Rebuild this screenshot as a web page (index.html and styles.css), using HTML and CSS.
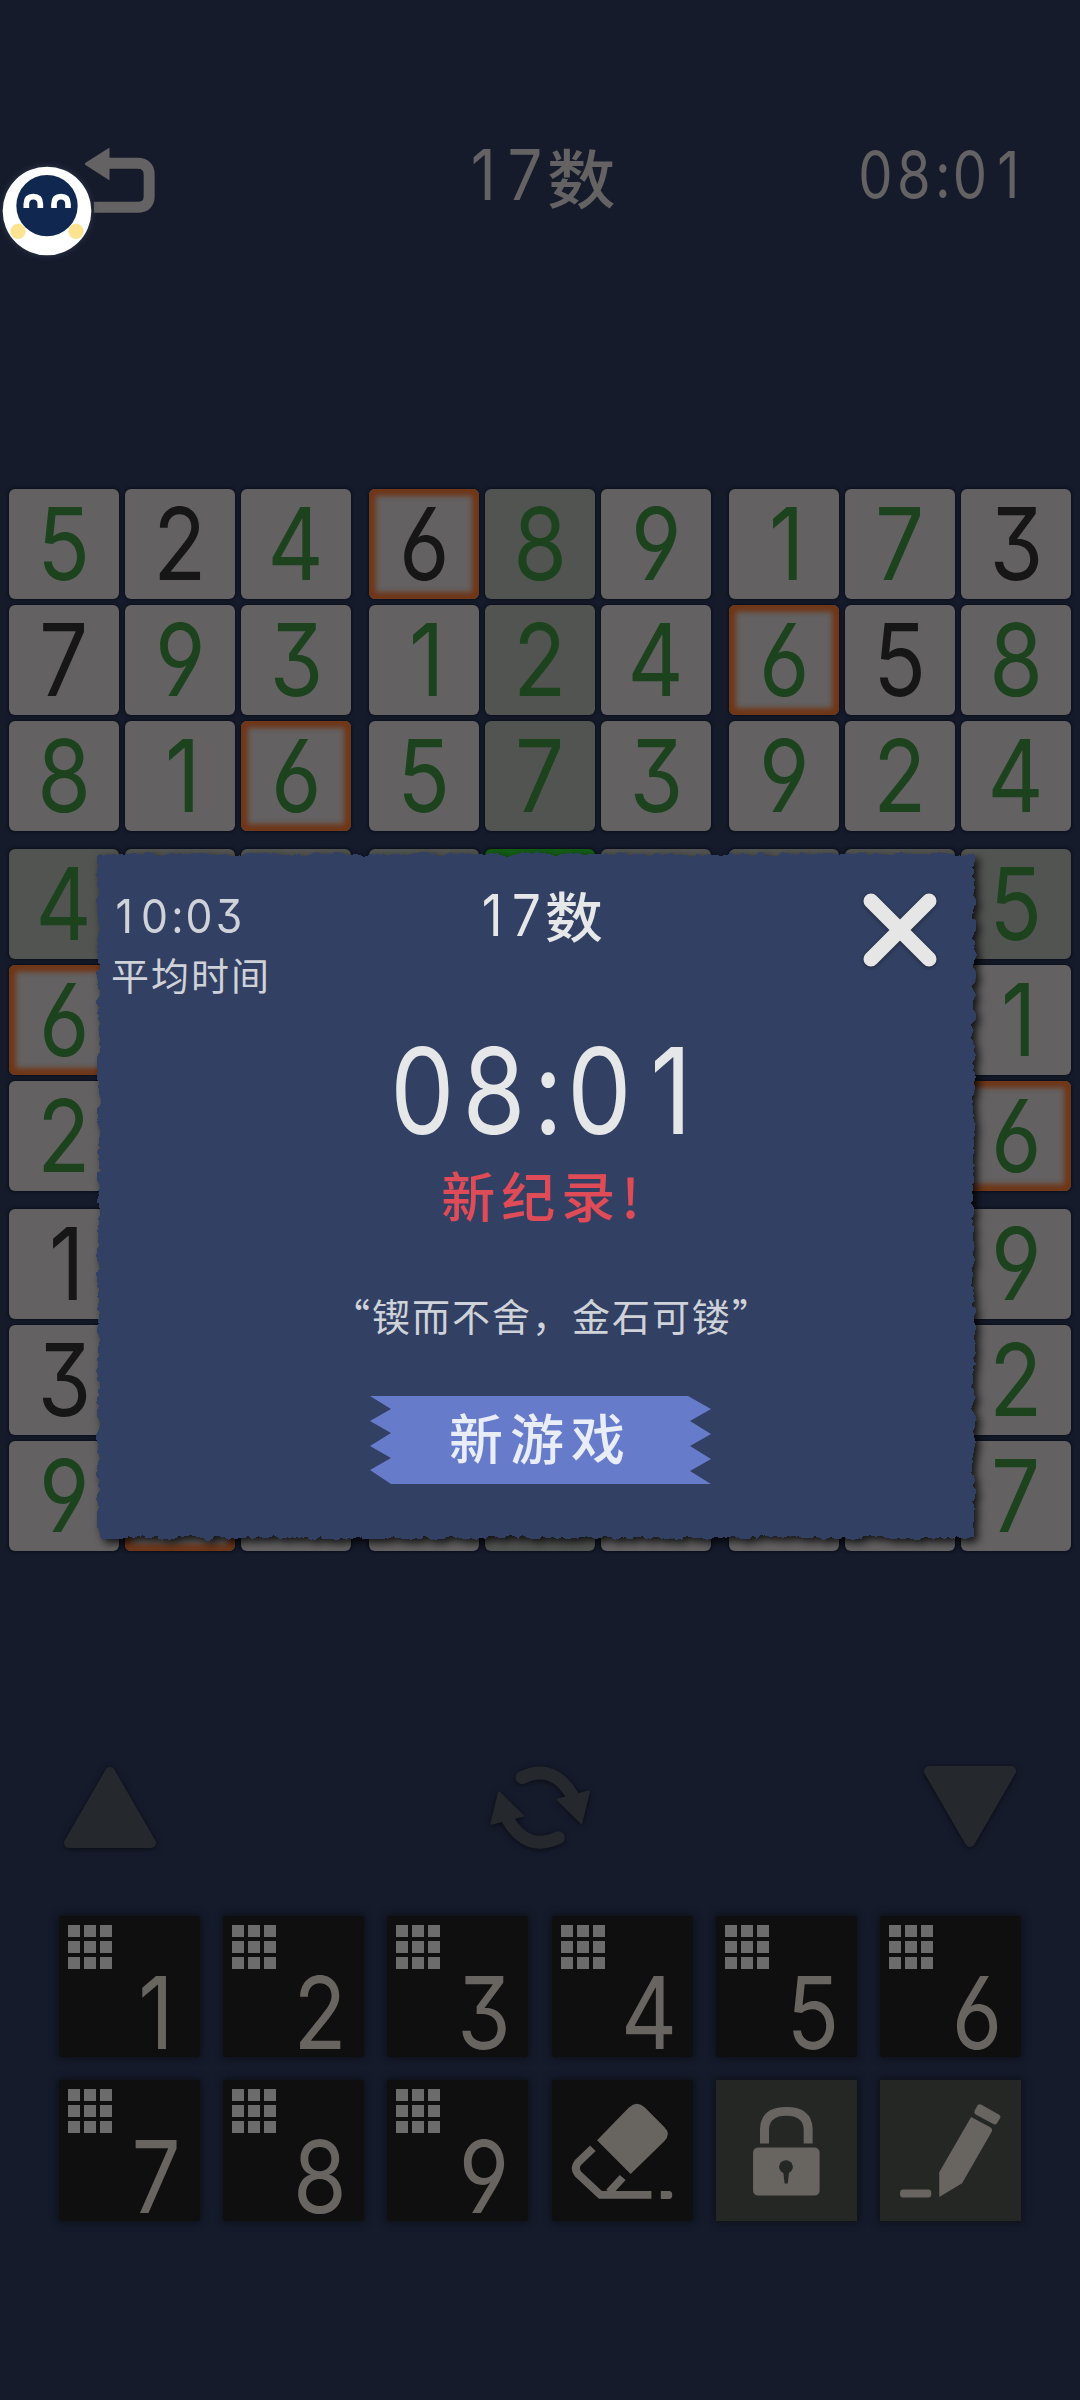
FILE: index.html
```html
<!DOCTYPE html>
<html lang="zh-CN">
<head>
<meta charset="utf-8">
<title>17数</title>
<link rel="stylesheet" href="styles.css">
</head>
<body>
<div class="screen">
  <header class="topbar">
    <svg class="back" viewBox="0 0 210 198"><path d="M3 44 73 0Q75-1 75 2V94Q75 97 72 95L3 51Q-1 48 3 44Z" fill="#646262"/><path d="M70 46H158Q194 46 194 80V144Q194 178 158 178H28" fill="none" stroke="#646262" stroke-width="33"/></svg>
    <h1 class="title"><span class="num"><b class="one">1</b>7</span><span class="han">数</span></h1>
    <div class="clock num">08<b class="colon">:</b>0<b class="one">1</b></div>
  </header>

  <main class="board">
    <div class="cell"><i>5</i></div><div class="cell given"><i>2</i></div><div class="cell"><i>4</i></div><div class="cell given same"><i>6</i></div><div class="cell tint"><i>8</i></div><div class="cell"><i>9</i></div><div class="cell"><i class="slim">1</i></div><div class="cell"><i>7</i></div><div class="cell given"><i>3</i></div>
    <div class="cell given"><i>7</i></div><div class="cell"><i>9</i></div><div class="cell"><i>3</i></div><div class="cell"><i class="slim">1</i></div><div class="cell tint"><i>2</i></div><div class="cell"><i>4</i></div><div class="cell same"><i>6</i></div><div class="cell given"><i>5</i></div><div class="cell"><i>8</i></div>
    <div class="cell"><i>8</i></div><div class="cell"><i class="slim">1</i></div><div class="cell same"><i>6</i></div><div class="cell"><i>5</i></div><div class="cell tint"><i>7</i></div><div class="cell"><i>3</i></div><div class="cell"><i>9</i></div><div class="cell"><i>2</i></div><div class="cell"><i>4</i></div>
    <div class="cell tint"><i>4</i></div><div class="cell tint"></div><div class="cell tint"></div><div class="cell tint"></div><div class="cell active"></div><div class="cell tint"></div><div class="cell tint"></div><div class="cell tint"></div><div class="cell tint"><i>5</i></div>
    <div class="cell same"><i>6</i></div><div class="cell"></div><div class="cell"></div><div class="cell"></div><div class="cell"></div><div class="cell"></div><div class="cell"></div><div class="cell"></div><div class="cell"><i class="slim">1</i></div>
    <div class="cell"><i>2</i></div><div class="cell"></div><div class="cell"></div><div class="cell"></div><div class="cell"></div><div class="cell"></div><div class="cell"></div><div class="cell"></div><div class="cell same"><i>6</i></div>
    <div class="cell given"><i class="slim">1</i></div><div class="cell"></div><div class="cell"></div><div class="cell"></div><div class="cell"></div><div class="cell"></div><div class="cell"></div><div class="cell"></div><div class="cell"><i>9</i></div>
    <div class="cell given"><i>3</i></div><div class="cell"></div><div class="cell"></div><div class="cell"></div><div class="cell"></div><div class="cell"></div><div class="cell"></div><div class="cell"></div><div class="cell"><i>2</i></div>
    <div class="cell"><i>9</i></div><div class="cell same"></div><div class="cell"></div><div class="cell"></div><div class="cell tint"></div><div class="cell"></div><div class="cell"></div><div class="cell"></div><div class="cell"><i>7</i></div>
  </main>

  <nav class="tools">
    <svg class="tri" viewBox="0 0 94 84"><path d="M47 7 88 78H6Z"/></svg>
    <svg class="refresh" viewBox="150 70 302 262"><g stroke-width="39" stroke-linecap="round"><path d="M245 111Q340 67 397 165"/><path d="M355 292Q260 336 203 238"/></g><path d="M352 177 447 153 424 248Z"/><path d="M248 226 153 250 176 155Z"/></svg>
    <svg class="tri" viewBox="0 0 94 84"><path d="M47 77 6 6H88Z"/></svg>
  </nav>

  <section class="pad">
    <button class="key"><span class="dots"></span><i>1</i></button>
    <button class="key"><span class="dots"></span><i>2</i></button>
    <button class="key"><span class="dots"></span><i>3</i></button>
    <button class="key"><span class="dots"></span><i>4</i></button>
    <button class="key"><span class="dots"></span><i>5</i></button>
    <button class="key"><span class="dots"></span><i>6</i></button>
    <button class="key"><span class="dots"></span><i>7</i></button>
    <button class="key"><span class="dots"></span><i>8</i></button>
    <button class="key"><span class="dots"></span><i>9</i></button>
    <button class="key"><svg viewBox="0 0 407 422" preserveAspectRatio="none"><path d="M130 180 222 82Q245 60 268 82L324 141Q345 162 324 183L227 281Z"/><path d="M118 204 75 247Q62 264 75 281L140 344H287M204 292 165 336" fill="none" stroke="#686460" stroke-width="23"/><path d="M314 332H338Q347 332 347 344T338 356H314Z"/></svg></button>
    <button class="key lit"><svg viewBox="0 0 407 422" preserveAspectRatio="none"><path d="M140 190V147Q142 94 203 94T266 147V190" fill="none" stroke="#686460" stroke-width="26"/><rect x="107" y="202" width="192" height="144" rx="15"/><circle cx="202" cy="260" r="20" fill="#252724"/><path d="M193 265H212L207 310H198Z" fill="#252724"/></svg></button>
    <button class="key lit"><svg viewBox="0 0 407 422" preserveAspectRatio="none"><rect x="58" y="328" width="90" height="24" rx="9"/><path d="M171 276 263 111 317 141Q327 147 322 156L237 309 171 350Z"/><path d="M282 75Q287 70 293 74L344 104Q350 108 347 114L337 130Q333 135 327 132L276 103Q270 99 273 92Z"/></svg></button>
  </section>

  <section class="modal">
    <svg class="paper" viewBox="0 0 917 725"><defs><filter id="torn" x="0" y="0" width="917" height="725" filterUnits="userSpaceOnUse"><feTurbulence type="fractalNoise" baseFrequency=".11" numOctaves="3" seed="4"/><feDisplacementMap in="SourceGraphic" scale="9" xChannelSelector="R" yChannelSelector="G"/></filter></defs><rect x="20" y="21" width="876" height="684" fill="#314064" filter="url(#torn)"/></svg>
    <div class="average"><span class="num"><b class="one">1</b>0<b class="colon">:</b>03</span><small>平均时间</small></div>
    <h2 class="name"><span class="num"><b class="one">1</b>7</span><span class="han">数</span></h2>
    <svg class="close" viewBox="0 0 74 74"><path d="M8 8 66 66M66 8 8 66"/></svg>
    <div class="result num">08<b class="colon">:</b>0<b class="one">1</b></div>
    <p class="record">新纪录!</p>
    <p class="quote">“锲而不舍，金石可镂”</p>
    <button class="new">新游戏</button>
  </section>

  <svg class="avatar" viewBox="0 0 270 270"><circle cx="135" cy="135" r="133" fill="#fff"/><circle cx="48" cy="196" r="23" fill="#fbe391"/><circle cx="222" cy="196" r="23" fill="#fbe391"/><circle cx="135" cy="119" r="92" fill="#10284f"/><path d="M73 126V114Q73 92 94 92T115 114V126M156 126V114Q156 92 177 92T198 114V126" fill="none" stroke="#fff" stroke-width="17"/></svg>
</div>
</body>
</html>
```
FILE: styles.css
```css
* { box-sizing: border-box; }
body { margin: 0; background: #161b2c; font-family: "Noto Sans CJK SC", sans-serif; }
.screen { position: relative; width: 1080px; height: 2400px; overflow: hidden; }
h1, h2, p { margin: 0; font-weight: 400; }
button { border: 0; padding: 0; font: inherit; }
i, .num { font-family: Inter, sans-serif; font-style: normal; font-feature-settings: "cv03", "cv04", "cv09"; }

/* Narrow, widely spaced digits */
.num { display: block; width: max-content; letter-spacing: .08em; transform: scaleX(.88); }
.num b { display: inline-block; font-weight: inherit; letter-spacing: 0; margin-right: .08em; text-align: center; }
.one { width: .62em; }
.colon { width: .25em; }
.han { transform: scaleX(1.07); transform-origin: left; }

.topbar { display: grid; grid-template-columns: 1fr 200px 1fr; align-items: center; height: 350px; padding: 0 53px 0 84px; color: #646262; }
.back { width: 71px; height: 66px; margin-top: 12px; }
.title { display: flex; align-items: center; font-size: 64px; font-weight: 500; line-height: 1; white-space: nowrap; margin: 0 0 0 -3px; }
.title .num { font-size: 70px; font-weight: 400; transform-origin: right; }
.clock { justify-self: end; font-size: 64px; font-weight: 400; line-height: 1; transform: scaleX(.85); transform-origin: right; margin-right: -3px; }

.board { display: grid; grid-template-columns: 110px 110px 110px 122px 110px 110px 122px 110px 110px; grid-template-rows: 110px 110px 110px 122px 110px 110px 122px 110px 110px; gap: 6px; justify-items: end; align-items: end; margin: 139px 9px 0; width: 1062px; }
.cell { width: 110px; height: 110px; display: flex; align-items: center; justify-content: center; border-radius: 6px; background: #636162; color: #1c431d; box-shadow: 0 0 3px 1px #0b0f18; }
.cell i, .key i { font-size: 101px; line-height: 1; transform: scaleX(.86); }
.cell i { margin-top: -2px; }
.cell .slim { margin-left: 5px; }
.given { color: #161616; }
.tint { background: #525452; }
.active { background: #145d16; }
.same { box-shadow: inset 0 0 5px 7px #6f3719, 0 0 3px 1px #0b0f18; }

.tools { display: flex; justify-content: space-between; align-items: center; margin: 209px 63px 0; height: 94px; }
.tools svg { fill: #25292e; stroke: #25292e; filter: drop-shadow(0 1px 3px #080b12); }
.tri { width: 94px; height: 84px; stroke-width: 10px; stroke-linejoin: round; }
.refresh { width: 101px; height: 87px; overflow: visible; }
.refresh > path { stroke-width: 6px; stroke-linejoin: round; }
.refresh g { fill: none; }

.pad { display: grid; grid-template-columns: repeat(6, 141px); grid-auto-rows: 141px; gap: 23px 23.2px; margin: 62px 0 0 59px; }
.key { display: flex; align-items: flex-start; position: relative; background: #0f0f0f; color: #686460; border-radius: 3px; box-shadow: 0 0 7px 2px #0d1119; }
.key svg { width: 141px; height: 141px; fill: #686460; }
.key.lit { background: #252724; border-radius: 0; }
.dots { flex: none; margin: 9px 0 0 9px; width: 44px; height: 44px; background: repeating-linear-gradient(90deg, transparent 0 12px, #0f0f0f 12px 16px), repeating-linear-gradient(#6c6c6c 0 12px, #0f0f0f 12px 16px); }
.key i { flex: none; width: 70px; text-align: center; margin: 46px 0 0 9px; }

.modal { position: absolute; z-index: 1; left: 98px; top: 853px; width: 877px; height: 685px; color: #e6e7e9; display: grid; grid-template-columns: 270px 1fr 270px; grid-template-rows: 175px 125px 90px 130px 145px; }
.paper { position: absolute; left: -20px; top: -20px; width: 917px; height: 725px; z-index: -1; filter: drop-shadow(4px 4px 4px #000c); }
.average { display: flex; flex-direction: column; padding: 38px 0 0 13px; color: #cfd2d9; }
.average .num { font-size: 47px; font-weight: 400; line-height: 50px; transform: scaleX(.91); transform-origin: left; }
.average small { font-size: 38px; line-height: 50px; letter-spacing: 2px; white-space: nowrap; margin-top: 8px; }
.name { display: flex; align-items: center; align-self: start; margin: 32px 0 0 99px; font-size: 54px; font-weight: 500; line-height: 60px; white-space: nowrap; }
.name .num { font-size: 58px; font-weight: 400; transform-origin: right; }
.close { width: 74px; height: 74px; margin: 40px 0 0 158px; stroke: #e6e6e6; stroke-width: 15px; stroke-linecap: round; filter: drop-shadow(0 1px 2px #0006); }
.result, .record, .quote, .new { grid-column: 1 / -1; justify-self: center; white-space: nowrap; }
.result { font-size: 119px; line-height: 127px; margin-left: 28px; transform: scaleX(.855); }
.record { color: #df4b56; font-size: 54px; font-weight: 500; line-height: 84px; letter-spacing: 6px; margin-left: 14px; }
.quote { color: #cfd2d9; font-size: 38px; line-height: 143px; letter-spacing: 2px; text-spacing-trim: space-all; padding-left: 31px; }
.new { width: 341px; height: 88px; margin: 23px 0 0 8px; align-self: start; background: #677bcb; color: #e9edf8; font-size: 54px; font-weight: 500; line-height: 82px; letter-spacing: 7px; clip-path: polygon(0 0, 318px 0, 341px 13px, 320px 25px, 341px 38px, 320px 50px, 341px 63px, 320px 75px, 341px 88px, 21px 88px, 0 74px, 21px 62px, 0 50px, 21px 37px, 0 25px, 21px 13px); padding-bottom: 6px; }
.avatar { position: absolute; left: 2px; top: 166px; width: 90px; height: 90px; filter: drop-shadow(0 0 3px #345c); }
```
